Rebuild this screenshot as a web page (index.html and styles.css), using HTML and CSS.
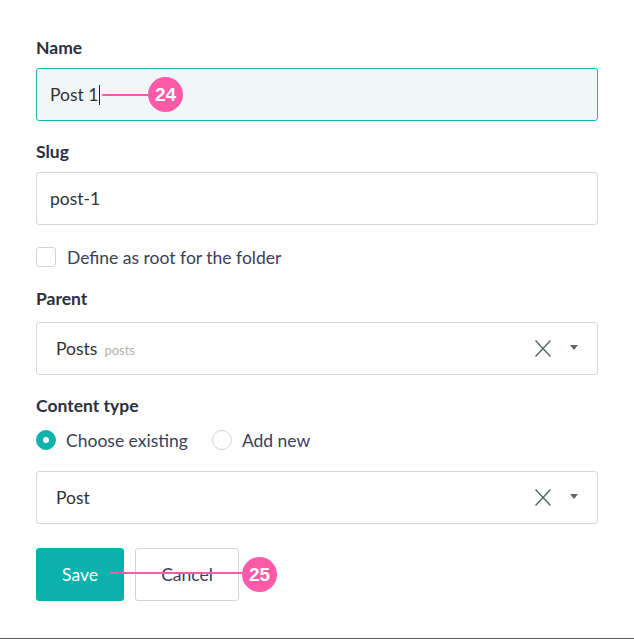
FILE: index.html
```html
<!DOCTYPE html>
<html>
<head>
<meta charset="utf-8">
<link rel="stylesheet" href="styles.css">
</head>
<body>
<div class="page">
  <form class="form">
    <div class="field field-name">
      <label class="label">Name</label>
      <div class="input input-active"><span class="value">Post 1</span><span class="caret"></span></div>
    </div>
    <div class="field field-slug">
      <label class="label">Slug</label>
      <div class="input"><span class="value">post-1</span></div>
    </div>
    <div class="check-row">
      <span class="checkbox"></span>
      <span class="check-text">Define as root for the folder</span>
    </div>
    <div class="field field-parent">
      <label class="label">Parent</label>
      <div class="select">
        <span class="value">Posts</span><span class="hint">posts</span>
        <span class="spacer"></span>
        <svg class="clear" width="16" height="17" viewBox="0 0 16 17"><path d="M0.5 0.5L15.5 16.5M15.5 0.5L0.5 16.5" stroke="#5d6666" stroke-width="1.5" fill="none"/></svg>
        <svg class="caret-down" width="8" height="5" viewBox="0 0 8 5"><path d="M0 0H8L4 5Z" fill="#5d6666"/></svg>
      </div>
    </div>
    <div class="field field-type">
      <label class="label">Content type</label>
      <div class="radio-row">
        <span class="radio radio-on"></span><span class="radio-text">Choose existing</span>
        <span class="radio"></span><span class="radio-text">Add new</span>
      </div>
      <div class="select select-type">
        <span class="value">Post</span>
        <span class="spacer"></span>
        <svg class="clear" width="16" height="17" viewBox="0 0 16 17"><path d="M0.5 0.5L15.5 16.5M15.5 0.5L0.5 16.5" stroke="#5d6666" stroke-width="1.5" fill="none"/></svg>
        <svg class="caret-down" width="8" height="5" viewBox="0 0 8 5"><path d="M0 0H8L4 5Z" fill="#5d6666"/></svg>
      </div>
    </div>
    <div class="buttons">
      <button type="button" class="btn btn-save">Save</button>
      <button type="button" class="btn btn-cancel">Cancel</button>
    </div>
  </form>
  <div class="note note-24"><span class="note-line"></span><span class="note-dot">24</span></div>
  <div class="note note-25"><span class="note-line"></span><span class="note-dot">25</span></div>
</div>
</body>
</html>
```
FILE: styles.css
```css
* { box-sizing: border-box; }
html, body { margin: 0; padding: 0; background: #fff; }
body {
  font-family: "Lato", "Open Sans", sans-serif;
  color: #333;
}
.page {
  position: relative;
  width: 634px;
  height: 639px;
  border-bottom: 1px solid #5a5a5a;
  overflow: hidden;
}
.form {
  padding: 36px 36px 0 36px;
  width: 634px;
}
.label {
  display: block;
  font-size: 17.5px;
  font-weight: 700;
  color: #2a3042;
  line-height: 24px;
  height: 24px;
  margin-bottom: 8px;
}
.field-slug { margin-top: 19px; }
.field-parent { margin-top: 18px; }
.field-parent .label { margin-bottom: 11px; }
.field-type { margin-top: 19px; }
.input, .select {
  width: 562px;
  height: 53px;
  border: 1px solid #d9d9d9;
  border-radius: 3px;
  display: flex;
  align-items: center;
  font-size: 17.5px;
  color: #333;
  background: #fff;
}
.input { padding-left: 13px; }
.input-active {
  border-color: #1bb6b1;
  background: #f1f7f7;
}
.caret {
  display: inline-block;
  width: 1px;
  height: 20px;
  background: #222;
  margin-left: 1px;
}
.select { padding: 0 19px 0 19px; }
.hint {
  font-size: 13px;
  color: #b3b3b3;
  margin-left: 7px;
  margin-top: 2px;
}
.spacer { flex: 1; }
.clear { margin-right: 19px; }
.caret-down { margin-top: -3px; }
.check-row {
  margin-top: 20px;
  height: 24px;
  display: flex;
  align-items: center;
}
.checkbox {
  width: 20px;
  height: 20px;
  border: 1px solid #d4d4d4;
  border-radius: 3px;
  margin-right: 11px;
}
.check-text {
  font-size: 17.5px;
  color: #39405a;
}
.radio-row {
  margin-top: 10px;
  height: 24px;
  display: flex;
  align-items: center;
}
.radio {
  width: 20px;
  height: 20px;
  border-radius: 50%;
  border: 1px solid #d4d4d4;
  margin-right: 10px;
  position: relative;
}
.radio-on {
  background: #10b2ad;
  border-color: #10b2ad;
}
.radio-on::after {
  content: "";
  position: absolute;
  left: 6px;
  top: 6px;
  width: 6px;
  height: 6px;
  border-radius: 50%;
  background: #fff;
}
.radio-text {
  font-size: 17.5px;
  color: #39405a;
  margin-right: 24px;
}
.select-type { margin-top: 19px; }
.buttons {
  margin-top: 24px;
  display: flex;
  gap: 11px;
}
.btn {
  height: 53px;
  border-radius: 3px;
  font-family: inherit;
  font-size: 17.5px;
  padding: 0;
  cursor: pointer;
}
.btn-save {
  width: 88px;
  background: #0bb1ad;
  border: 1px solid #0bb1ad;
  color: #fff;
}
.btn-cancel {
  width: 104px;
  background: #fff;
  border: 1px solid #d4d4d4;
  color: #39405a;
}
.note {
  position: absolute;
  display: flex;
  align-items: center;
}
.note-line {
  height: 2px;
  background: #ff5aa8;
}
.note-dot {
  width: 35px;
  height: 35px;
  border-radius: 50%;
  background: #ff5aa8;
  color: #fff;
  font-family: "Liberation Sans", Arial, sans-serif;
  font-weight: 700;
  font-size: 19px;
  display: flex;
  align-items: center;
  justify-content: center;
}
.note-24 { left: 102px; top: 77px; }
.note-24 .note-line { width: 46px; }
.note-25 { left: 110px; top: 557px; }
.note-25 .note-line { width: 132px; margin-top: -4px; }
```
